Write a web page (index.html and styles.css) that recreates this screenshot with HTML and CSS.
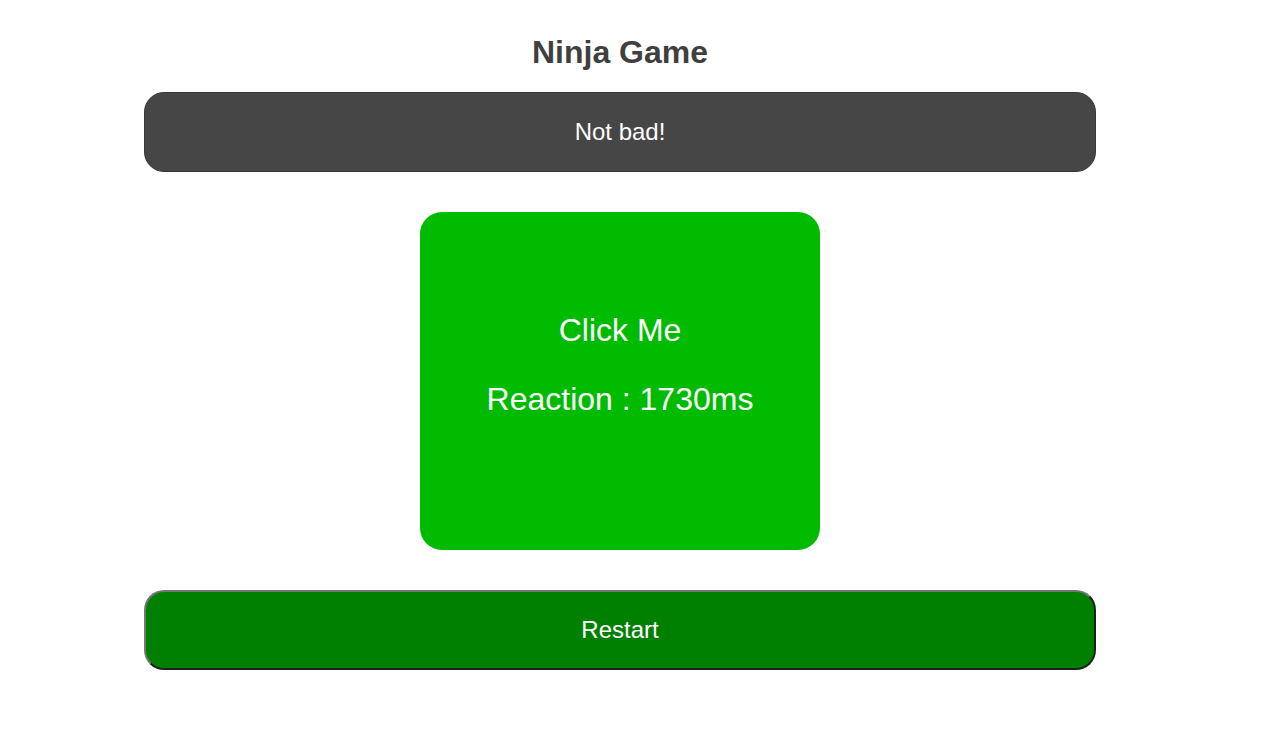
FILE: index.html
```html
<!DOCTYPE html>
<html lang="en">
<head>
<meta charset="utf-8">
<title>Ninja Game</title>
<link rel="stylesheet" href="styles.css">
</head>
<body>
<main class="game">
  <h1 class="title">Ninja Game</h1>
  <div class="banner">Not bad!</div>
  <div class="target">
    <p class="target-line">Click Me</p>
    <p class="target-line">Reaction : 1730ms</p>
  </div>
  <button class="restart" type="button">Restart</button>
</main>
</body>
</html>
```

FILE: styles.css
```css
* { box-sizing: border-box; }

html, body {
  margin: 0;
  padding: 0;
  background: #ffffff;
}

body {
  font-family: "Liberation Sans", Arial, sans-serif;
}

.game {
  width: 1240px;
  padding-top: 34px;
  display: flex;
  flex-direction: column;
  align-items: center;
}

.title {
  margin: 0;
  font-size: 32px;
  line-height: 37px;
  font-weight: bold;
  color: #3f3f3f;
}

.banner {
  margin-top: 21px;
  width: 952px;
  height: 80px;
  border-radius: 20px;
  background: #464646;
  border: 1px solid #3a3a3a;
  color: #ffffff;
  font-size: 24px;
  display: flex;
  align-items: center;
  justify-content: center;
}

.target {
  margin-top: 40px;
  width: 400px;
  height: 338px;
  border-radius: 22px;
  background: #00bb00;
  color: #ffffff;
  padding-top: 100px;
  display: flex;
  flex-direction: column;
  align-items: center;
  gap: 32px;
}

.target-line {
  margin: 0;
  font-size: 32px;
  line-height: 37px;
}

.restart {
  margin-top: 40px;
  width: 952px;
  height: 80px;
  border-radius: 20px;
  background: #008000;
  border: 2px solid #767676;
  border-right-color: #1f1f1f;
  border-bottom-color: #1f1f1f;
  color: #ffffff;
  font-family: "Liberation Sans", Arial, sans-serif;
  font-size: 24px;
  padding: 0;
  cursor: pointer;
}
```
